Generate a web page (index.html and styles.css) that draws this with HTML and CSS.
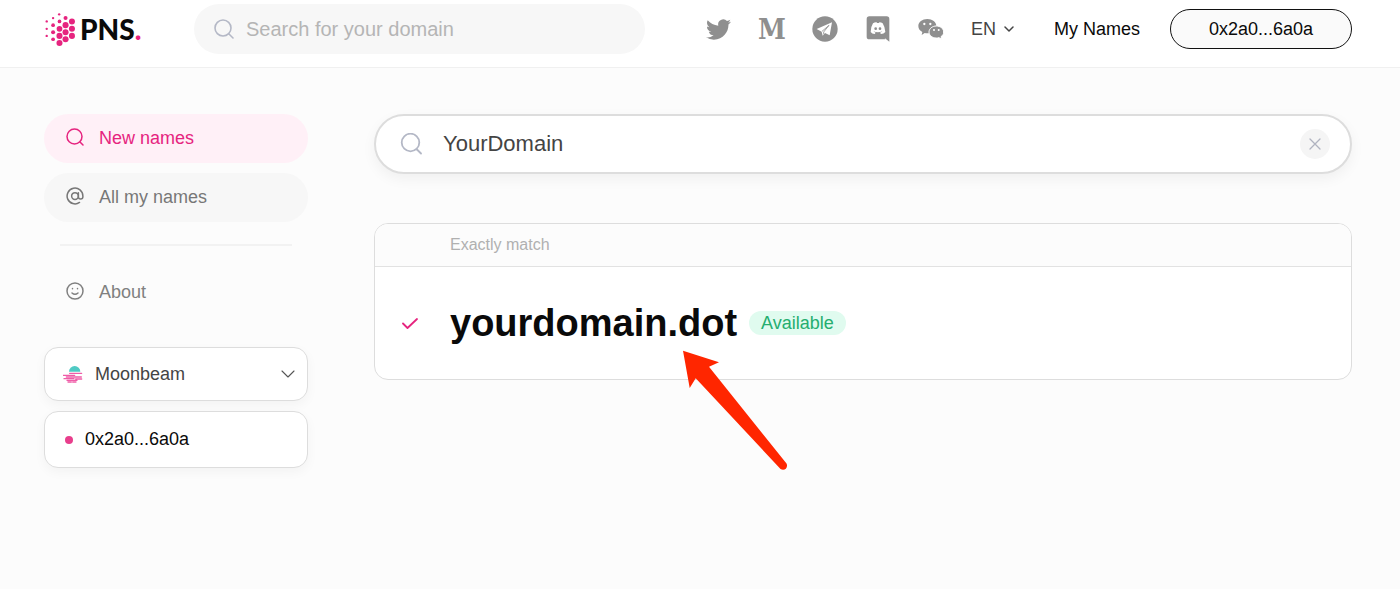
FILE: index.html
```
<!DOCTYPE html>
<html lang="en">
<head>
    <meta charset="UTF-8">
    <meta name="viewport" content="width=device-width, initial-scale=1.0">
    <title>PNS</title>
    <link rel="stylesheet" href="styles.css">
</head>
<body>
    <header class="header">
        <a class="logo" href="#">
            <svg width="31" height="35" viewBox="45 36 92 104" fill="#e6247f" aria-hidden="true">
                <circle cx="50" cy="64" r="3.5"/><circle cx="50" cy="86" r="3.5"/><circle cx="50" cy="107" r="3.5"/>
                <circle cx="69" cy="54" r="3.5"/><circle cx="69" cy="75" r="5.5"/><circle cx="69" cy="96" r="6"/><circle cx="69" cy="117" r="5.5"/>
                <circle cx="87" cy="43" r="3.5"/><circle cx="88" cy="64" r="5.5"/><circle cx="88" cy="86" r="8.5"/><circle cx="88" cy="107" r="9"/><circle cx="88" cy="128" r="9"/>
                <circle cx="106" cy="54" r="6"/><circle cx="106" cy="75" r="9"/><circle cx="106" cy="96" r="9"/><circle cx="106" cy="117" r="9"/>
                <circle cx="125" cy="64" r="9"/><circle cx="125" cy="86" r="9"/><circle cx="125" cy="107" r="9"/>
            </svg>
            <span class="logo-text">PNS<span class="logo-dot">.</span></span>
        </a>

        <form class="header-search">
            <svg width="20" height="20" viewBox="0 0 20 20" fill="none" stroke="#b4b8c6" stroke-width="1.6" stroke-linecap="round" aria-hidden="true">
                <circle cx="9" cy="9" r="8"/>
                <path d="M15 15l4 4"/>
            </svg>
            <input type="text" placeholder="Search for your domain" aria-label="Search for your domain">
        </form>

        <nav class="header-nav">
            <div class="social">
                <a href="#" aria-label="Twitter">
                    <svg width="25" height="25" viewBox="0 0 24 24" fill="currentColor">
                        <path d="M23.953 4.57a10 10 0 01-2.825.775 4.958 4.958 0 002.163-2.723c-.951.555-2.005.959-3.127 1.184a4.92 4.92 0 00-8.384 4.482C7.69 8.095 4.067 6.13 1.64 3.162a4.822 4.822 0 00-.666 2.475c0 1.71.87 3.213 2.188 4.096a4.904 4.904 0 01-2.228-.616v.06a4.923 4.923 0 003.946 4.827 4.996 4.996 0 01-2.212.085 4.936 4.936 0 004.604 3.417 9.867 9.867 0 01-6.102 2.105c-.39 0-.779-.023-1.17-.067a13.995 13.995 0 007.557 2.209c9.053 0 13.998-7.496 13.998-13.985 0-.21 0-.42-.015-.63A9.935 9.935 0 0024 4.59z"/>
                    </svg>
                </a>
                <a class="social-medium" href="#" aria-label="Medium">M</a>
                <a href="#" aria-label="Telegram">
                    <svg width="26" height="26" viewBox="0 0 78 78">
                        <circle cx="39" cy="39" r="38" fill="currentColor"/>
                        <path d="M14 39L60 19 53 58 39 51 32 59 29 47z" fill="#fff"/>
                        <path d="M51 28L30 46M51 28L35 48v7" fill="none" stroke="currentColor" stroke-width="2.5"/>
                    </svg>
                </a>
                <a href="#" aria-label="Discord">
                    <svg width="26" height="26" viewBox="0 0 78 78">
                        <path d="M13 1h52a8 8 0 0 1 8 8v68l-14-11 2 4H13a8 8 0 0 1-8-8V9a8 8 0 0 1 8-8z" fill="currentColor"/>
                        <path d="M24 22q6-4 11-3l1 2h6l1-2q6 0 10 3 7 11 8 26-5 6-13 6l-3-4q5-1 7-4-13 6-27 0 3 3 7 4l-3 4q-8 0-12-6 0-15 7-26z" fill="#fff"/>
                        <circle cx="32" cy="38" r="4" fill="currentColor"/>
                        <circle cx="45" cy="38" r="4" fill="currentColor"/>
                    </svg>
                </a>
                <a href="#" aria-label="WeChat">
                    <svg width="26" height="26" viewBox="0 0 78 78">
                        <path d="M28 9c15 0 27 9 27 21S43 52 28 52q-4 0-8-1l-9 6 2-9C5 44 1 38 1 30 1 18 13 9 28 9z" fill="currentColor"/>
                        <path d="M55 30c12 0 22 8 22 18 0 6-3 11-8 14l2 8-8-5q-4 1-8 1c-12 0-22-8-22-18s10-18 22-18z" fill="currentColor" stroke="#fff" stroke-width="3"/>
                        <g fill="#fff">
                            <circle cx="19" cy="24" r="3.5"/><circle cx="37" cy="24" r="3.5"/>
                            <circle cx="48" cy="42" r="3"/><circle cx="62" cy="42" r="3"/>
                        </g>
                    </svg>
                </a>
            </div>
            <div class="language">
                <select aria-label="Language">
                    <option>EN</option>
                </select>
                <svg width="10" height="8" viewBox="0 0 10 8" fill="none" stroke="#444" stroke-width="1.5" stroke-linecap="round" stroke-linejoin="round" aria-hidden="true">
                    <path d="M1 2l4 4 4-4"/>
                </svg>
            </div>
            <a class="my-names" href="#">My Names</a>
            <button class="wallet-btn" type="button">0x2a0...6a0a</button>
        </nav>
    </header>

    <div class="layout">
        <aside class="sidebar">
            <nav class="side-nav">
                <a class="side-link active" href="#">
                    <svg width="18" height="18" viewBox="0 0 18 18" fill="none" stroke="currentColor" stroke-width="1.5" stroke-linecap="round" aria-hidden="true">
                        <circle cx="8.5" cy="8.5" r="7.5"/>
                        <path d="M14 14l3 3"/>
                    </svg>
                    New names
                </a>
                <a class="side-link filled" href="#">
                    <svg width="18" height="18" viewBox="0 0 24 24" fill="none" stroke="currentColor" stroke-width="2" stroke-linecap="round" aria-hidden="true">
                        <circle cx="12" cy="12" r="4.500"/>
                        <path d="M16.500 7.500v5.500a3 3 0 0 0 6 0v-1a10.500 10.500 0 1 0-4.500 8.600"/>
                    </svg>
                    All my names
                </a>
                <hr class="side-divider">
                <a class="side-link" href="#">
                    <svg width="18" height="18" viewBox="0 0 18 18" fill="none" stroke="currentColor" stroke-width="1.5" stroke-linecap="round" aria-hidden="true">
                        <circle cx="9" cy="9" r="8"/>
                        <path d="M6 11q3 2.600 6 0M6.500 6.500v.2M11.500 6.500v.2"/>
                    </svg>
                    About
                </a>
            </nav>

            <div class="side-card network">
                <svg width="20" height="18" viewBox="0 0 60 54" aria-hidden="true">
                    <path d="M18 20a17 17 0 0 1 34 0z" fill="#4fcac4"/>
                    <path d="M20 25h36M1 31h34M10 36h45M3 41h30M38 42h18M12 46h30M15 51h10M29 51h10" stroke="#ef5da8" stroke-width="4" stroke-linecap="round"/>
                </svg>
                <select aria-label="Network">
                    <option>Moonbeam</option>
                </select>
                <svg width="14" height="8" viewBox="0 0 14 8" fill="none" stroke="#555" stroke-width="1.1" stroke-linecap="round" stroke-linejoin="round" aria-hidden="true">
                    <path d="M1 1l6 6 6-6"/>
                </svg>
            </div>

            <button class="side-card account" type="button">
                <span class="account-dot"></span>
                0x2a0...6a0a
            </button>
        </aside>

        <main class="content">
            <form class="search">
                <svg width="22" height="22" viewBox="0 0 22 22" fill="none" stroke="#b4b8c6" stroke-width="1.8" stroke-linecap="round" aria-hidden="true">
                    <circle cx="10.500" cy="9.500" r="8.800"/>
                    <path d="M17 16.500l4 4"/>
                </svg>
                <input type="text" value="YourDomain" aria-label="Domain name">
                <button class="clear-btn" type="button" aria-label="Clear">
                    <svg width="12" height="12" viewBox="0 0 12 12" fill="none" stroke="#b0b3c0" stroke-width="1.3" stroke-linecap="round">
                        <path d="M1 1l10 10M11 1L1 11"/>
                    </svg>
                </button>
            </form>

            <section class="results">
                <div class="results-header">Exactly match</div>
                <div class="result">
                    <svg class="result-check" width="16" height="12" viewBox="0 0 16 12" fill="none" stroke="#e6247f" stroke-width="1.8" stroke-linecap="round" stroke-linejoin="round" aria-hidden="true">
                        <path d="M1 6.500l4.500 4.500L15 2"/>
                    </svg>
                    <h1 class="result-name">yourdomain.dot</h1>
                    <span class="badge">Available</span>
                </div>
                <svg class="pointer" width="106" height="121" viewBox="0 0 106 121" fill="#ff2600" aria-hidden="true">
                    <path d="M0 .7L36 12.300 26 16.700 103.500 113.500c2 4-2 8-6 5.500L12.700 28.300 6.700 38z"/>
                </svg>
            </section>
        </main>
    </div>
</body>
</html>
```
FILE: styles.css
```
* {
    margin: 0;
    padding: 0;
    box-sizing: border-box;
}

body {
    font-family: "Liberation Sans", Arial, sans-serif;
    font-size: 18px;
    color: #0a0a0a;
    background-color: #fcfcfc;
    min-height: 100vh;
}

a {
    color: inherit;
    text-decoration: none;
}

input,
select,
button {
    font: inherit;
    color: inherit;
    border: none;
    background: none;
    outline: none;
}

select {
    appearance: none;
    cursor: pointer;
}

button {
    cursor: pointer;
}

svg {
    display: block;
    flex-shrink: 0;
}

.header {
    display: flex;
    align-items: center;
    padding: 4px 48px 13px 45px;
    background: #fff;
    border-bottom: 1px solid #f0f0f0;
}

.logo {
    display: flex;
    align-items: center;
    gap: 4px;
    width: 149px;
    flex-shrink: 0;
}

.logo-text {
    font-family: Lato, sans-serif;
    font-size: 28px;
    line-height: 32px;
    font-weight: 900;
}

.logo-dot {
    color: #e6247f;
}

.header-search {
    display: flex;
    align-items: center;
    gap: 12px;
    flex: 0 1 451px;
    height: 50px;
    padding: 0 20px;
    border-radius: 25px;
    background: #f7f7f7;
}

.header-search input {
    flex: 1;
    min-width: 0;
    font-size: 20px;
}

.header-search input::placeholder {
    color: #b5b5b5;
}

.header-nav {
    display: flex;
    align-items: center;
    margin-left: auto;
}

.social {
    display: flex;
    align-items: center;
    gap: 27px;
    color: #8f8f8f;
}

.social a {
    display: flex;
    align-items: center;
    justify-content: center;
    width: 26px;
    height: 26px;
}

.social .social-medium {
    font-family: "DejaVu Serif Condensed", "DejaVu Serif", serif;
    font-size: 28px;
    font-weight: bold;
}

.language {
    display: flex;
    align-items: center;
    gap: 7px;
    margin: 0 40px 0 27px;
    color: #444;
}

.my-names {
    white-space: nowrap;
}

.wallet-btn {
    height: 40px;
    margin-left: 30px;
    padding: 0 38px;
    border: 1px solid #111;
    border-radius: 20px;
    background: #fafafa;
}

.layout {
    display: grid;
    grid-template-columns: 264px 1fr;
    gap: 66px;
    padding: 46px 48px 46px 44px;
}

.side-nav {
    display: flex;
    flex-direction: column;
    gap: 10px;
    margin-bottom: 30px;
}

.side-link {
    display: flex;
    align-items: center;
    gap: 15px;
    height: 49px;
    padding: 0 22px;
    border-radius: 25px;
    color: #808080;
}

.side-link svg {
    margin-bottom: 4px;
}

.side-link.active {
    color: #e6247f;
    background: #fff0f7;
}

.side-link.filled {
    color: #777;
    background: #f7f7f7;
}

.side-divider {
    height: 2px;
    margin: 12px 16px;
    border: none;
    background: #f2f2f2;
}

.side-card {
    display: flex;
    align-items: center;
    width: 100%;
    padding: 0 12px 0 18px;
    border: 1px solid #ddd;
    border-radius: 14px;
    background: #fff;
    box-shadow: 0 4px 12px rgba(0, 0, 0, 0.04);
}

.network {
    height: 54px;
    gap: 12px;
    color: #444;
}

.network select {
    flex: 1;
    min-width: 0;
}

.account {
    height: 57px;
    gap: 12px;
    margin-top: 10px;
}

.account-dot {
    width: 8px;
    height: 8px;
    margin-left: 2px;
    border-radius: 50%;
    background: #e83e8c;
}

.search {
    display: flex;
    align-items: center;
    gap: 21px;
    height: 60px;
    padding: 0 20px 0 24px;
    border: 2px solid #ddd;
    border-radius: 30px;
    background: #fff;
    box-shadow: 0 5px 14px rgba(0, 0, 0, 0.05);
}

.search input {
    flex: 1;
    min-width: 0;
    font-size: 22px;
    color: #444;
}

.clear-btn {
    display: flex;
    align-items: center;
    justify-content: center;
    width: 30px;
    height: 30px;
    border-radius: 50%;
    background: #f5f5f5;
}

.results {
    position: relative;
    margin-top: 49px;
    border: 1px solid #ddd;
    border-radius: 14px;
    background: #fff;
}

.results-header {
    padding: 0 75px;
    border-bottom: 1px solid #e2e2e2;
    border-radius: 13px 13px 0 0;
    background: #fcfcfc;
    font-size: 16px;
    line-height: 42px;
    color: #b0b0b0;
}

.result {
    display: flex;
    align-items: center;
    height: 112px;
    padding: 0 27px;
}

.result-name {
    margin: 0 12px 0 32px;
    font-size: 38px;
}

.badge {
    padding: 0 12px;
    border-radius: 12px;
    background: #e0fbef;
    line-height: 24px;
    color: #25ae70;
}

/* arrow laid over the result card */
.pointer {
    position: absolute;
    top: 126px;
    left: 308px;
}
```
